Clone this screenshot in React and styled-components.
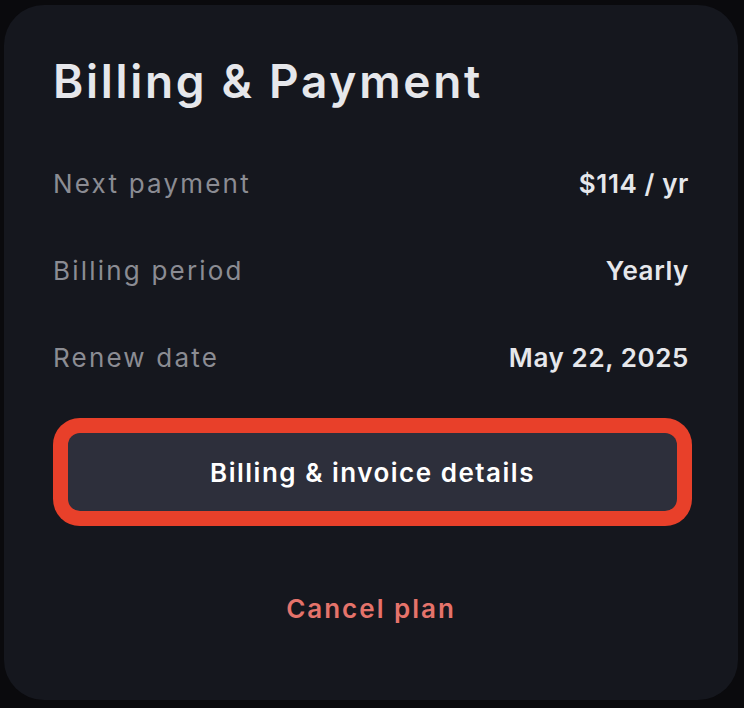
import React from "react";
import styled, { createGlobalStyle } from "styled-components";

const GlobalStyle = createGlobalStyle`
  html, body {
    margin: 0;
    padding: 0;
    background: #0a0a0d;
  }
  body {
    font-family: Inter, "Open Sans", sans-serif;
  }
`;

const rows = [
  { label: "Next payment", value: "$114 / yr" },
  { label: "Billing period", value: "Yearly" },
  { label: "Renew date", value: "May 22, 2025" },
];

const App = () => {
  return (
    <>
      <GlobalStyle />
      <Page>
        <Card>
          <Title>Billing &amp; Payment</Title>
          <Rows>
            {rows.map((r) => (
              <Row key={r.label}>
                <Label>{r.label}</Label>
                <Value>{r.value}</Value>
              </Row>
            ))}
          </Rows>
          <DetailsButton>Billing &amp; invoice details</DetailsButton>
          <CancelLink>Cancel plan</CancelLink>
        </Card>
      </Page>
    </>
  );
};

export default App;

const Page = styled.div`
  width: 744px;
  height: 708px;
  padding: 5px 6px 8px 4px;
  box-sizing: border-box;
`;

const Card = styled.div`
  height: 695px;
  box-sizing: border-box;
  background: #15171e;
  border-radius: 40px;
  padding: 48px 49px 0 49px;
  display: flex;
  flex-direction: column;
`;

const Title = styled.h1`
  margin: 0;
  font-size: 46px;
  line-height: 56px;
  font-weight: 600;
  color: #e6e7eb;
  letter-spacing: 2.7px;
`;

const Rows = styled.div`
  margin-top: 31px;
  display: flex;
  flex-direction: column;
`;

const Row = styled.div`
  height: 87px;
  display: flex;
  align-items: center;
  justify-content: space-between;
`;

const Label = styled.span`
  font-size: 26px;
  color: #8b8c93;
  letter-spacing: 2.2px;
`;

const Value = styled.span`
  font-size: 26px;
  font-weight: 600;
  color: #e6e7eb;
  letter-spacing: 0.6px;
`;

const DetailsButton = styled.button`
  margin: 32px 12px 0 15px;
  height: 78px;
  border: none;
  border-radius: 12px;
  background: #2d2f3b;
  box-shadow: 0 0 0 15px #e8402a;
  color: #ffffff;
  font-family: Inter, "Open Sans", sans-serif;
  font-size: 26px;
  font-weight: 600;
  letter-spacing: 1.5px;
  cursor: pointer;
`;

const CancelLink = styled.div`
  margin-top: 67px;
  height: 60px;
  display: flex;
  align-items: center;
  justify-content: center;
  font-size: 26px;
  font-weight: 600;
  letter-spacing: 2px;
  color: #e5736b;
`;
